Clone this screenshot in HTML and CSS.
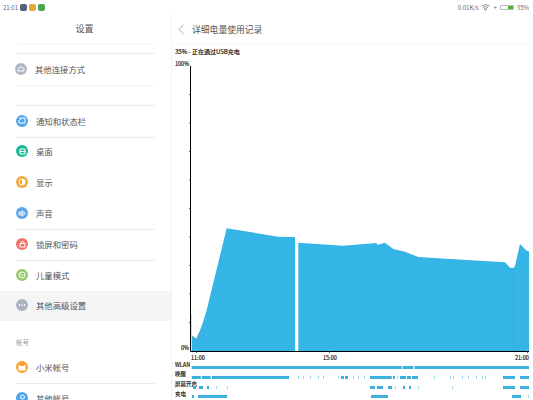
FILE: index.html
```html
<!DOCTYPE html>
<html lang="zh-CN">
<head>
    <meta charset="UTF-8">
    <meta name="viewport" content="width=device-width, initial-scale=1.0">
    <title>设置</title>
    <link rel="stylesheet" href="styles.css">
</head>
<body>
    <header class="status-bar">
        <div class="status-left">
            <span>21:01</span>
            <i class="app-dot app-dark"></i>
            <i class="app-dot app-orange"></i>
            <i class="app-dot app-green"></i>
        </div>
        <div class="status-right">
            <span>0.01K/s</span>
            <svg class="wifi" width="9" height="7" viewBox="0 0 9 7"><path d="M0.5 2 Q4.5 -0.8 8.5 2 M2 3.5 Q4.5 1.8 7 3.5 M4.5 6.5 L3 5 Q4.5 4 6 5 Z" fill="none" stroke="#777" stroke-width="0.8"/></svg>
            <span>+</span>
            <div class="battery"><div class="battery-level"></div></div>
            <span>35%</span>
        </div>
    </header>

    <div class="panes">
        <aside class="sidebar">
            <div class="sidebar-title">设置</div>

            <div class="group group-first">
                <div class="row">
                    <span class="icon icon-grey"><svg width="8" height="6" viewBox="0 0 8 6"><path d="M1 5 H7 V3.5 Q6 1 4 1 Q2 1 1 3.5 Z" fill="none" stroke="#fff"/></svg></span>
                    其他连接方式
                </div>
            </div>

            <div class="group group-second">
                <div class="row">
                    <span class="icon icon-blue"><svg width="8" height="7" viewBox="0 0 8 7"><path d="M2 1 H7 V6 H1 V3 M1 1 L3 3" fill="none" stroke="#fff"/></svg></span>
                    通知和状态栏
                </div>
                <div class="row row-line">
                    <span class="icon icon-teal"><svg width="7" height="7" viewBox="0 0 7 7"><path d="M1 1 H6 V6 H1 Z M1 3.5 H6" fill="none" stroke="#fff"/></svg></span>
                    桌面
                </div>
                <div class="row">
                    <span class="icon icon-orange"><svg width="8" height="8" viewBox="0 0 8 8"><circle cx="4" cy="4" r="3" fill="none" stroke="#fff"/><path d="M4 1 A3 3 0 0 1 4 7 Z" fill="#fff"/></svg></span>
                    显示
                </div>
                <div class="row">
                    <span class="icon icon-sound"><svg width="8" height="7" viewBox="0 0 8 7"><path d="M1 2 H3 V5 H1 Z M4 1 L5 1 V6 L4 6 Z M6.5 2 Q7.5 3.5 6.5 5" fill="none" stroke="#fff" stroke-width="0.9"/></svg></span>
                    声音
                </div>
                <div class="row row-line">
                    <span class="icon icon-coral"><svg width="7" height="8" viewBox="0 0 7 8"><path d="M1 3.5 H6 V7 H1 Z M2.2 3.5 V2 Q3.5 0.2 4.8 2 V3.5" fill="none" stroke="#fff"/></svg></span>
                    锁屏和密码
                </div>
                <div class="row row-line">
                    <span class="icon icon-lime"><svg width="8" height="8" viewBox="0 0 8 8"><circle cx="4" cy="4" r="3" fill="none" stroke="#fff"/><path d="M2.5 2.5 L5 5" stroke="#fff"/></svg></span>
                    儿童模式
                </div>
                <div class="row row-active">
                    <span class="icon icon-slate"><svg width="8" height="2" viewBox="0 0 8 2"><path d="M1 0 H2 V2 H1 Z M3.5 0 H4.5 V2 H3.5 Z M6 0 H7 V2 H6 Z" fill="#fff"/></svg></span>
                    其他高级设置
                </div>
            </div>

            <div class="group-label">帐号</div>
            <div class="row">
                <span class="icon icon-mi"><svg width="8" height="7" viewBox="0 0 8 7"><path d="M0.5 0.5 L2.5 2 H5.5 L7.5 0.5 V6.5 H0.5 Z" fill="#fff"/></svg></span>
                小米帐号
            </div>
            <div class="row row-line">
                <span class="icon icon-blue"><svg width="7" height="8" viewBox="0 0 7 8"><circle cx="3.5" cy="3" r="2" fill="none" stroke="#fff"/><path d="M1 7.5 H6" stroke="#fff"/></svg></span>
                其他帐号
            </div>
        </aside>

        <main class="detail">
            <div class="detail-header">
                <svg class="back" width="7" height="11" viewBox="0 0 7 11"><path d="M6 0.5 L1 5.5 L6 10.5" fill="none" stroke="#aaa"/></svg>
                <h1>详细电量使用记录</h1>
            </div>
            <div class="caption">35% - 正在通过USB充电</div>

            <!-- chart coords: viewBox x/y are the page x/y, so the numbers read straight off the screen -->
            <svg class="chart" width="361" height="343" viewBox="172 57 361 343">
                <polygon class="area" points="191.7,351 191.7,336 196.7,339.3 202.7,323 206.7,310 226.7,228.3 278,236.7 295,237 295,351"/>
                <polygon class="area" points="298.3,351 298.3,242.7 343,245.7 376.7,243 377.3,245 385,242.7 393.3,249 405,251.7 418.3,257 450,259 505,262.3 510,267.7 513.3,268 515,266 520,244 526.7,250.7 529,251.3 529,351"/>
                <path d="M513.3 268 V351" stroke="#5a9fc0" stroke-width="0.6"/>
                <path d="M191.2 336 V314" stroke="#b9b58a" stroke-width="0.6"/>
                <path d="M192 336 L196.7 339.3 L199 333" fill="none" stroke="#5a6a80" stroke-width="0.6"/>

                <path class="axis" d="M190.5 66 V351.5 H529"/>
                <path class="tick" d="M189 94.5 h1 M189 123 h1 M189 151.5 h1 M189 180 h1 M189 208.5 h1 M189 237 h1 M189 265.5 h1 M189 294 h1 M189 322.5 h1 M196.5 351 v2 M329.5 351 v2 M527.5 351 v2"/>

                <text class="label" x="175" y="66">100%</text>
                <text class="label" x="181" y="350">0%</text>
                <text class="label" x="191" y="359.500">11:00</text>
                <text class="label" x="323" y="359.500">15:00</text>
                <text class="label" x="515" y="359.500">21:00</text>

                <text class="label" x="175" y="367">WLAN</text>
                <text class="label" x="175" y="376">唤醒</text>
                <text class="label" x="175" y="385.500">屏幕开启</text>
                <text class="label" x="175" y="395.500">充电</text>

                <g class="track">
                    <rect x="191.700" y="366" width="210" height="3"/>
                    <rect x="402.700" y="366" width="10.500" height="3"/>
                    <rect x="414.500" y="366" width="114.500" height="3"/>
                </g>
                <g class="track">
                    <rect x="191.700" y="376" width="9" height="3"/>
                    <rect x="201.700" y="376" width="9" height="3"/>
                    <rect x="212" y="376" width="77" height="3"/>
                    <rect x="298" y="376" width="1" height="3"/>
                    <rect x="303" y="376" width="1" height="3"/>
                    <rect x="310" y="376" width="1" height="3"/>
                    <rect x="318" y="376" width="1" height="3"/>
                    <rect x="323" y="376" width="1" height="3"/>
                    <rect x="338" y="376" width="1" height="3"/>
                    <rect x="341" y="376" width="3" height="3"/>
                    <rect x="345" y="376" width="3" height="3"/>
                    <rect x="353" y="376" width="1" height="3"/>
                    <rect x="358" y="376" width="1" height="3"/>
                    <rect x="364" y="376" width="1" height="3"/>
                    <rect x="370" y="376" width="21.700" height="3"/>
                    <rect x="393" y="376" width="2" height="3"/>
                    <rect x="397" y="376" width="1" height="3"/>
                    <rect x="400" y="376" width="6" height="3"/>
                    <rect x="407" y="376" width="4" height="3"/>
                    <rect x="412" y="376" width="6" height="3"/>
                    <rect x="434" y="376" width="1" height="3"/>
                    <rect x="450" y="376" width="1" height="3"/>
                    <rect x="453" y="376" width="1" height="3"/>
                    <rect x="462" y="376" width="1" height="3"/>
                    <rect x="468" y="376" width="1" height="3"/>
                    <rect x="476" y="376" width="1" height="3"/>
                    <rect x="482" y="376" width="1" height="3"/>
                    <rect x="485" y="376" width="1" height="3"/>
                    <rect x="503" y="376" width="12" height="3"/>
                    <rect x="520" y="376" width="9" height="3"/>
                </g>
                <g class="track">
                    <rect x="193" y="386" width="3" height="3"/>
                    <rect x="199" y="386" width="4" height="3"/>
                    <rect x="207" y="386" width="2" height="3"/>
                    <rect x="216" y="386" width="1" height="3"/>
                    <rect x="227" y="386" width="1" height="3"/>
                    <rect x="370" y="386" width="5" height="3"/>
                    <rect x="377" y="386" width="6" height="3"/>
                    <rect x="388" y="386" width="4" height="3"/>
                    <rect x="395" y="386" width="1" height="3"/>
                    <rect x="403" y="386" width="2" height="3"/>
                    <rect x="409" y="386" width="2" height="3"/>
                    <rect x="418" y="386" width="1" height="3"/>
                    <rect x="452" y="386" width="1" height="3"/>
                    <rect x="503" y="386" width="12" height="3"/>
                    <rect x="520" y="386" width="9" height="3"/>
                </g>
                <g class="track">
                    <rect x="192" y="395" width="2" height="3"/>
                    <rect x="198" y="395" width="29" height="3"/>
                    <rect x="371" y="395" width="17" height="3"/>
                    <rect x="512" y="395" width="9" height="3"/>
                    <rect x="528" y="395" width="1" height="3"/>
                </g>
            </svg>
        </main>
    </div>
</body>
</html>
```

FILE: styles.css
```css
:root {
    --text-main: #555;
    --line: #ececec;
    --chart-blue: #35b4e6;
}

* {
    margin: 0;
    padding: 0;
    box-sizing: border-box;
}

body {
    width: 533px;
    height: 400px;
    overflow: hidden;
    background: #fff;
    color: var(--text-main);
    font-family: "Noto Sans CJK SC", "Liberation Sans", sans-serif;
    font-size: 8.4px;
}

.status-bar {
    height: 15px;
    display: flex;
    justify-content: space-between;
    align-items: center;
    padding: 0 4px 1px 3px;
    font-size: 6px;
    color: #666;
}

.status-left,
.status-right {
    display: flex;
    align-items: center;
}

.status-left {
    gap: 2px;
}

.status-right {
    gap: 3px;
}

.app-dot {
    width: 7px;
    height: 7px;
    border-radius: 2px;
}

.app-dark { background: #56607a; }
.app-orange { background: #eaa63f; }
.app-green { background: #4aa84f; }

.battery {
    width: 14px;
    height: 5px;
    border: 1px solid #bbb;
    border-radius: 1px;
    display: flex;
    justify-content: flex-end;
}

.battery-level {
    width: 5px;
    background: #4cb52f;
}

.panes {
    display: flex;
    height: 385px;
}

.sidebar {
    width: 172px;
    flex-shrink: 0;
    border-right: 1px solid #f3f3f3;
    overflow: hidden;
}

.sidebar-title {
    height: 29px;
    line-height: 28px;
    text-align: center;
    font-size: 9px;
    border-bottom: 1px solid #f5f5f5;
    margin: 0 17px;
    padding-right: 2px;
}

.group {
    border-top: 1px solid var(--line);
    border-bottom: 1px solid #f3f3f3;
    margin: 0 16px;
}

.group-first {
    margin-top: 9px;
}

.group-second {
    margin: 19px 0 0;
    border: 0;
}

.group-second::before {
    content: "";
    display: block;
    height: 1px;
    margin: 0 16px;
    background: var(--line);
}

.group-first .row {
    padding-left: 0;
    margin: 0 -1px;
}

.row {
    height: 30.800px;
    padding-bottom: 1px;
    display: flex;
    align-items: center;
    gap: 8px;
    padding-left: 16px;
    position: relative;
}

.row-line::before {
    content: "";
    position: absolute;
    top: 0;
    left: 16px;
    right: 16px;
    height: 1px;
    background: var(--line);
}

.row-active {
    background: #f5f5f5;
}

.group-label {
    margin-top: 16px;
    height: 15px;
    padding-left: 16px;
    font-size: 6.500px;
    color: #999;
}

.icon {
    width: 12px;
    height: 12px;
    border-radius: 50%;
    display: flex;
    align-items: center;
    justify-content: center;
    flex-shrink: 0;
}

.icon-grey { background: #b1b9c4; }
.icon-blue { background: #4ea5ee; }
.icon-teal { background: #19b995; }
.icon-orange { background: #f4a93a; }
.icon-sound { background: #58a6e8; }
.icon-coral { background: #ee7565; }
.icon-lime { background: #97c96b; }
.icon-slate { background: #aab4c0; }
.icon-mi { background: #f8a030; }

.detail {
    flex: 1;
    min-width: 0;
}

.detail-header {
    height: 30px;
    display: flex;
    align-items: center;
    gap: 7px;
    padding-left: 6px;
    border-bottom: 1px solid #f6f6f6;
}

.detail-header h1 {
    font-size: 8.800px;
    font-weight: 400;
    color: #555;
}

.back {
    flex-shrink: 0;
}

.caption {
    height: 12px;
    line-height: 14px;
    padding-left: 3px;
    font-size: 6px;
    color: #222;
    -webkit-text-stroke: 0.2px #222;
}

.chart {
    display: block;
}

.area {
    fill: var(--chart-blue);
}

.axis {
    fill: none;
    stroke: #000;
    stroke-width: 1;
}

.tick {
    fill: none;
    stroke: #333;
    stroke-width: 0.8;
}

.label {
    font-size: 5.500px;
    fill: #111;
    stroke: #111;
    stroke-width: 0.15;
}

.track {
    fill: #3cb1de;
}

/* single-pixel marks read paler in the reference */
.track rect[width="1"] {
    opacity: 0.5;
}
```
